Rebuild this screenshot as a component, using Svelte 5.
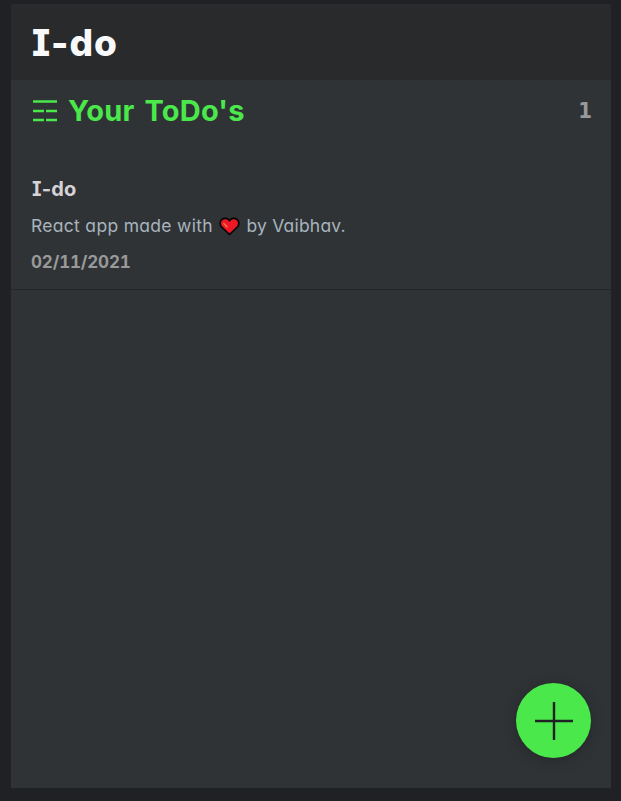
<script>
  const todos = [
    { title: 'I-do', before: 'React app made with', after: 'by Vaibhav.', date: '02/11/2021' }
  ];
</script>

<div class="page">
  <main>
    <header><h1>I-do</h1></header>
    <div class="heading">
      <svg class="list" width="25" height="22" viewBox="0 0 25 22" aria-hidden="true">
        <path d="M0 1.5H24M0 11H11M13 11H24M0 20H11M13 20H24" stroke="#4ae84a" stroke-width="2.7" />
      </svg>
      <h2>Your ToDo's</h2>
      <span class="count">{todos.length}</span>
    </div>
    <ul>
      {#each todos as todo}
        <li>
          <h3>{todo.title}</h3>
          <p>
            <span class="before">{todo.before}</span>
            <svg width="21" height="19" viewBox="0 0 21 19" aria-hidden="true">
              <path d="M10.5 17.5L2.7 10C.5 7.8.7 4.4 2.8 2.6 5.1.6 8.7 1.1 10.5 3.7 12.3 1.1 15.9.6 18.2 2.6 20.3 4.4 20.5 7.8 18.3 10Z" fill="#ed1726" stroke="#050505" stroke-width="1.7" stroke-linejoin="round" />
              <path d="M4.8 6.5L8 9.9" stroke="#f5684e" stroke-width="1.6" stroke-linecap="round" />
            </svg>
            <span class="after">{todo.after}</span>
          </p>
          <time>{todo.date}</time>
        </li>
      {/each}
    </ul>
    <button aria-label="Add">
      <svg width="38" height="38" viewBox="0 0 38 38"><path d="M19 0V38M0 19H38" stroke="#202124" stroke-width="2.4" /></svg>
    </button>
  </main>
</div>

<style>
  :global(body) { background: #202124; }
  .page { box-sizing: border-box; height: 801px; padding: 4px 10px 13px 11px; background: #202124; font-family: Inter, "Liberation Sans", sans-serif; font-feature-settings: "cv08", "cv11"; overflow: hidden; }
  main { position: relative; height: 784px; background: #2f3336; }
  h1, h2, h3, p, ul { margin: 0; padding: 0; white-space: nowrap; }
  header { height: 76px; background: #292a2b; padding-left: 21px; }
  h1 { font-size: 37px; line-height: 77px; font-weight: 800; letter-spacing: .9px; color: #f8f9fa; }
  .heading { height: 60px; display: flex; align-items: center; padding: 0 20px 0 22px; }
  .list { flex: none; margin-right: 10px; padding-top: 1px; }
  h2 { font-size: 29px; line-height: 60px; padding-top: 1px; font-weight: 700; letter-spacing: .2px; word-spacing: 3px; color: #4ae84a; }
  .count { margin-left: auto; font: 700 22px/61px "DejaVu Sans Condensed", "DejaVu Sans", sans-serif; letter-spacing: -1px; color: #999; }
  ul { list-style: none; padding-top: 27px; }
  li { height: 122px; border-bottom: 1px solid #242629; padding-left: 20px; display: flex; flex-direction: column; }
  h3 { padding: 9px 0 0 1px; font-size: 20px; line-height: 26px; font-weight: 700; letter-spacing: .2px; color: #d6d2d6; }
  p { display: flex; align-items: center; margin-top: 11px; height: 26px; font-size: 17.5px; line-height: 26px; color: #a8b3bd; }
  .before { letter-spacing: .3px; }
  .after { letter-spacing: .2px; }
  p svg { margin: 0 6px 0 6.6px; flex: none; }
  time { margin-top: 10px; font-size: 17px; line-height: 26px; font-weight: 700; letter-spacing: -.15px; color: #999; font-feature-settings: "tnum"; }
  button { position: absolute; right: 20px; bottom: 30px; width: 75px; height: 75px; padding: 0; border: 0; border-radius: 50%; background: #4ae84a; display: flex; align-items: center; justify-content: center; box-shadow: 0 2px 12px rgba(32, 33, 36, .65); }
</style>
